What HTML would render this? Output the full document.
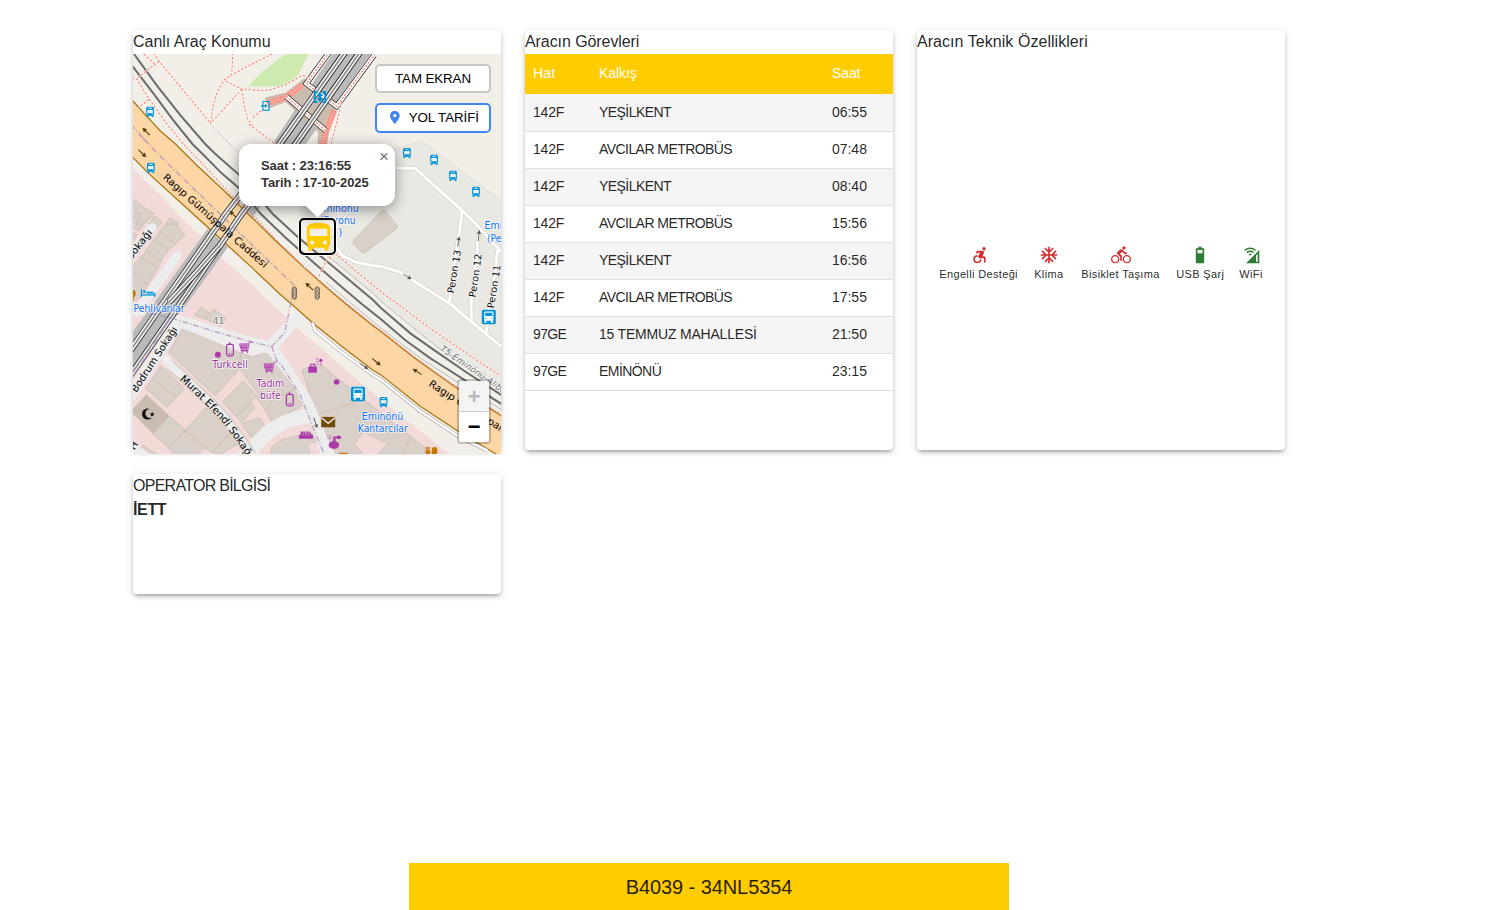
<!DOCTYPE html>
<html lang="tr">
<head>
<meta charset="utf-8">
<title>Araç Bilgisi</title>
<style>
*{box-sizing:border-box;}
html,body{margin:0;padding:0;background:#fff;}
body{width:1503px;height:910px;overflow:hidden;position:relative;font-family:"Liberation Sans",sans-serif;color:rgba(0,0,0,0.87);}
.card{position:absolute;background:#fff;border-radius:4px;box-shadow:0 3px 3px -2px rgba(0,0,0,0.2),0 3px 4px 0 rgba(0,0,0,0.14),0 1px 8px 0 rgba(0,0,0,0.12);}
.card h3{margin:0;font-weight:400;font-size:16px;line-height:24px;height:24px;letter-spacing:0.1px;white-space:nowrap;}
#c1{left:133px;top:30px;width:368px;height:420px;}
#c2{left:525px;top:30px;width:368px;height:420px;}
#c3{left:917px;top:30px;width:368px;height:420px;}
#c4{left:133px;top:474px;width:368px;height:120px;}
#map{position:absolute;left:0;top:24px;width:368px;height:400px;overflow:hidden;background:#f2efe9;}
#map svg{position:absolute;left:0;top:0;}
/* table */
table{border-collapse:collapse;width:368px;font-size:14px;table-layout:fixed;}
th{background:#ffcc00;color:#fff;font-weight:400;text-align:left;height:40px;padding:0 0 2px 8px;letter-spacing:0.15px;}
td{height:37px;padding:0 0 1px 8px;border-bottom:1px solid #e0e0e0;letter-spacing:0.15px;}
tr.o td{background:#f5f5f5;}
td.a{letter-spacing:-0.17px;}td.b{letter-spacing:-0.63px;}td.c{letter-spacing:-0.56px;}td.d{letter-spacing:-0.2px;}td.t{letter-spacing:-0.03px;}
/* features */
.feat{position:absolute;width:120px;text-align:center;font-size:11px;line-height:13px;white-space:nowrap;letter-spacing:0.35px;color:rgba(0,0,0,0.87);}
.feat svg{display:block;margin:0 auto 3px;}
/* map controls */
.mbtn{position:absolute;background:#fff;border-radius:5px;font-size:13.33px;text-align:center;color:#000;white-space:nowrap;}
.zoom{position:absolute;left:324px;top:325px;width:34px;height:65px;border:2px solid rgba(0,0,0,0.2);border-radius:4px;background-clip:padding-box;}
.zoom div{width:30px;height:30px;overflow:hidden;background:#fff;text-align:center;font:bold 22px/35px "Liberation Mono",monospace;color:#000;}
.zoom div.dis{background:#f4f4f4;color:#bbb;border-bottom:1px solid #ccc;height:31px;border-radius:2px 2px 0 0;}
.zoom div.en{border-radius:0 0 2px 2px;line-height:33.500px;}
.popup{position:absolute;left:106px;top:90px;width:156px;height:62px;background:#fff;border-radius:12px;box-shadow:0 3px 14px rgba(0,0,0,0.4);font-size:13px;font-weight:700;line-height:17.3px;color:#333;letter-spacing:-0.07px;padding:13px 0 0 22px;white-space:nowrap;}
.tip{position:absolute;left:11.5px;top:-9px;width:17px;height:17px;background:#fff;transform:rotate(45deg);box-shadow:0 3px 14px rgba(0,0,0,0.4);}
.tipc{position:absolute;left:164.5px;top:152px;width:40px;height:20px;overflow:hidden;}
.pclose{position:absolute;left:246px;top:94px;font-size:17px;line-height:17px;color:#757575;font-weight:400;}
.marker{position:absolute;left:166px;top:164px;width:37.300px;height:37.300px;border:2.100px solid #000;border-radius:5px;box-shadow:0 0 0 1px rgba(255,255,255,0.85);}
.marker svg{position:absolute;left:-1px;top:-1.800px;}
#bar{position:absolute;left:409px;top:863px;width:600px;height:47px;background:#ffcc00;text-align:center;font-size:20px;line-height:48px;color:rgba(0,0,0,0.87);letter-spacing:-0.08px;}
</style>
</head>
<body>

<div class="card" id="c1">
<h3 style="letter-spacing:-0.02px">Canlı Araç Konumu</h3>
<div id="map">
<!--MAPSTART--><svg width="368" height="400" viewBox="0 0 368 400">
<rect width="368" height="400" fill="#f2efe9"/>
<defs><clipPath id="cmk"><rect x="150" y="140" width="100" height="24.2"/><rect x="203.4" y="140" width="60" height="60"/></clipPath></defs>
<defs><clipPath id="cst"><rect x="120" y="0" width="130" height="92"/></clipPath></defs>
<polygon points="260.9,95.3 288.6,86.9 368.0,146.3 372.0,146.0 372.0,341.0 340.0,318.0 303.4,292.4 248.0,247.4 240.0,239.1 194.2,201.6 194.0,191.0 214.0,160.0 232.0,132.0" fill="#e9e8e3" />
<polyline points="232.0,132.0 260.9,95.3 288.6,86.9 368.0,146.3" fill="none" stroke="#d9cfbb" stroke-width="0.5" />
<polygon points="-2.0,112.6 29.7,143.3 44.5,160.0 68.3,182.8 87.0,203.0 120.0,231.2 128.0,240.0 153.6,263.2 163.5,273.6 193.2,298.4 207.0,311.0 240.0,338.7 254.0,351.0 316.3,400.0 -2.0,402.0" fill="#f2dad9" />
<polygon points="154.6,-1.0 176.4,-1.0 163.5,23.7 148.7,32.2 120.0,32.6 119.0,28.7 120.0,26.7 128.9,17.8 144.7,5.9" fill="#cdebb0" />
<polygon points="115.3,31.7 120.0,27.7 120.0,32.2" fill="#cdebb0" />
<polygon points="38.1,164.0 51.9,181.3 43.0,189.7 35.6,196.1 28.2,206.5 24.7,213.9 14.8,231.2 5.9,244.1 -1.0,248.0 -1.0,212.4 9.9,201.6 26.2,177.8" fill="#d9d0c9" stroke="#c4b5a7" stroke-width="0.6" stroke-linejoin="round"/>
<polyline points="26.2,177.8 43.0,189.7" fill="none" stroke="#c4b5a7" stroke-width="0.6" />
<polyline points="19.8,186.2 35.6,196.1" fill="none" stroke="#c4b5a7" stroke-width="0.6" />
<polyline points="12.9,196.1 28.2,206.5" fill="none" stroke="#c4b5a7" stroke-width="0.6" />
<polyline points="7.9,203.5 24.7,213.9" fill="none" stroke="#c4b5a7" stroke-width="0.6" />
<polyline points="-1.0,218.4 14.8,231.2" fill="none" stroke="#c4b5a7" stroke-width="0.6" />
<polygon points="-1.0,159.0 20.3,159.0 5.9,176.8 -1.0,172.9" fill="#d9d0c9" stroke="#c4b5a7" stroke-width="0.6" stroke-linejoin="round"/>
<polygon points="21.3,162.0 29.2,167.9 23.2,174.8 15.8,169.4" fill="#d9d0c9" stroke="#c4b5a7" stroke-width="0.6" stroke-linejoin="round"/>
<polygon points="-1.0,177.8 4.0,180.8 -1.0,188.7" fill="#d9d0c9" stroke="#c4b5a7" stroke-width="0.6" stroke-linejoin="round"/>
<polygon points="-1.0,144.8 8.9,151.2 -1.0,167.1" fill="#d9d0c9" stroke="#c4b5a7" stroke-width="0.6" stroke-linejoin="round"/>
<polygon points="9.9,152.7 21.3,159.1 10.9,170.0 3.0,170.0" fill="#d9d0c9" stroke="#c4b5a7" stroke-width="0.6" stroke-linejoin="round"/>
<polygon points="37.1,163.6 46.5,170.0 32.6,170.0" fill="#d9d0c9" stroke="#c4b5a7" stroke-width="0.6" stroke-linejoin="round"/>
<polygon points="61.3,261.3 68.1,253.1 76.2,259.3 72.0,264.7" fill="#d9d0c9" stroke="#c4b5a7" stroke-width="0.6" stroke-linejoin="round"/>
<polygon points="72.0,264.7 80.6,255.0 93.0,264.2 87.6,271.7" fill="#d9d0c9" stroke="#c4b5a7" stroke-width="0.6" stroke-linejoin="round"/>
<polygon points="49.5,274.6 107.8,298.5 105.8,315.9 82.1,341.7 35.6,298.4" fill="#d9d0c9" stroke="#c4b5a7" stroke-width="0.6" stroke-linejoin="round"/>
<polygon points="107.8,298.5 120.0,303.3 129.9,298.4 135.8,300.3 161.6,334.7 140.0,346.0 132.5,356.0 123.6,344.6 126.1,341.7 107.5,315.4" fill="#d9d0c9" stroke="#c4b5a7" stroke-width="0.6" stroke-linejoin="round"/>
<polygon points="89.5,347.6 110.2,327.3 124.1,341.7 102.3,362.4" fill="#d9d0c9" stroke="#c4b5a7" stroke-width="0.6" stroke-linejoin="round"/>
<polygon points="103.3,361.9 117.6,349.1 122.1,354.0 108.2,367.9" fill="#d9d0c9" stroke="#c4b5a7" stroke-width="0.6" stroke-linejoin="round"/>
<polygon points="140.0,346.0 161.6,334.7 169.0,352.0 138.8,368.4 132.5,356.0" fill="#d9d0c9" stroke="#c4b5a7" stroke-width="0.6" stroke-linejoin="round"/>
<polygon points="108.2,369.3 126.5,363.9 133.0,372.8 119.1,384.7" fill="#d9d0c9" stroke="#c4b5a7" stroke-width="0.6" stroke-linejoin="round"/>
<polygon points="13.4,340.7 36.1,361.9 20.3,379.7 -2.0,357.5" fill="#c9bcb0" stroke="#c4b5a7" stroke-width="0.6" stroke-linejoin="round"/>
<polygon points="27.7,312.0 51.4,334.7 34.1,353.5 12.4,334.2 19.8,323.9" fill="#d9d0c9" stroke="#c4b5a7" stroke-width="0.6" stroke-linejoin="round"/>
<polyline points="19.8,323.9 42.5,343.6" fill="none" stroke="#c4b5a7" stroke-width="0.6" />
<polygon points="36.1,361.9 52.4,375.8 35.6,394.1 20.3,379.7" fill="#d9d0c9" stroke="#c4b5a7" stroke-width="0.6" stroke-linejoin="round"/>
<polygon points="52.4,375.8 71.2,394.1 64.3,401.0 41.6,401.0 35.6,394.1" fill="#d9d0c9" stroke="#c4b5a7" stroke-width="0.6" stroke-linejoin="round"/>
<polygon points="73.2,353.5 97.4,378.8 79.1,398.0 71.2,394.1 52.4,375.8" fill="#d9d0c9" stroke="#c4b5a7" stroke-width="0.6" stroke-linejoin="round"/>
<polygon points="97.4,378.8 106.8,389.1 86.1,401.0 79.1,398.0" fill="#d9d0c9" stroke="#c4b5a7" stroke-width="0.6" stroke-linejoin="round"/>
<polygon points="9.9,391.1 24.7,401.0 5.9,401.0" fill="#d9d0c9" stroke="#c4b5a7" stroke-width="0.6" stroke-linejoin="round"/>
<polygon points="169.0,316.4 183.3,310.0 189.3,312.0 240.0,352.5 254.0,364.0 300.0,400.0 202.1,400.0 193.2,381.2 186.3,361.4 177.4,342.6" fill="#d9d0c9" stroke="#c4b5a7" stroke-width="0.6" stroke-linejoin="round"/>
<polyline points="186.3,360.5 219.9,348.6 227.8,345.6" fill="none" stroke="#c4b5a7" stroke-width="0.6" />
<polyline points="277.7,382.2 269.8,401.0" fill="none" stroke="#c4b5a7" stroke-width="0.6" />
<polygon points="221.5,389.9 230.7,378.0 254.3,389.9 243.6,402.0 232.0,402.0" fill="#f2dad9" stroke="#c4b5a7" stroke-width="0.5" />
<polygon points="147.7,386.2 166.5,381.2 179.4,379.3 183.3,387.2 175.4,401.0 137.8,401.0 138.8,393.1" fill="#d9d0c9" stroke="#c4b5a7" stroke-width="0.6" stroke-linejoin="round"/>
<polygon points="175.4,391.1 183.3,388.2 189.3,401.0 179.4,401.0" fill="#f2dad9" />
<polygon points="-2.0,249.0 41.5,259.8 120.0,283.5 134.8,286.5 145.7,293.9 134.8,299.4 129.9,298.4 120.0,302.0 107.8,298.5 49.5,274.6 -2.0,257.5" fill="#ededed" />
<polygon points="134.8,286.5 164.5,255.8 172.4,263.7 145.7,293.9" fill="#ededed" />
<polygon points="134.8,299.4 142.8,310.0 161.6,333.7 171.4,353.5 179.4,373.3 187.3,400.0 202.1,400.0 193.2,381.2 186.3,361.4 177.4,342.6 156.6,310.0 145.7,293.9 134.8,286.5" fill="#ededed" />
<polygon points="171.4,355.0 149.7,361.4 131.9,371.3 120.0,383.2 104.0,400.0 124.9,400.0 127.9,396.1 139.8,383.2 154.6,374.3 178.4,368.4" fill="#ededed" />
<polyline points="36.6,310.5 53.9,326.3 78.7,350.1 92.5,364.9 107.3,384.7 118.5,401.5" fill="none" stroke="#d9d0c9" stroke-width="11.2" />
<polyline points="30.5,302.5 36.6,310.5 53.9,326.3 78.7,350.1 92.5,364.9 107.3,384.7 118.5,401.5" fill="none" stroke="#ededed" stroke-width="7.6" />
<polyline points="44.0,270.0 7.0,327.0 -6.0,346.0" fill="none" stroke="#ededed" stroke-width="11.5" />
<polyline points="19.3,173.4 -5.0,204.5" fill="none" stroke="#ededed" stroke-width="8.5" stroke-linecap="round"/>
<polyline points="44.3,201.6 9.9,250.0 4.0,258.0" fill="none" stroke="#ededed" stroke-width="9.5" stroke-linecap="round"/>
<polygon points="-2.0,387.0 17.8,400.0 -2.0,400.0" fill="#ededed" />
<polygon points="-3.0,44.0 0.0,47.0 12.9,61.3 27.7,77.2 42.5,90.0 63.3,110.7 99.0,144.3 120.0,164.5 144.7,188.7 171.4,213.9 199.0,238.2 213.0,250.0 240.0,271.7 248.0,277.6 280.6,303.3 317.3,329.5 325.2,334.7 368.0,361.4 380.0,369.0 372.0,406.0 362.8,400.0 325.2,377.3 287.6,352.5 248.0,320.9 240.0,316.2 209.0,292.4 179.4,268.7 164.5,255.3 146.7,240.0 120.0,214.6 71.2,170.0 49.5,150.2 15.8,119.6 0.0,103.7 -3.0,100.7" fill="#fcd6a4" />
<polyline points="-3.0,44.0 0.0,47.0 12.9,61.3 27.7,77.2 42.5,90.0 63.3,110.7 99.0,144.3 120.0,164.5 144.7,188.7 171.4,213.9 199.0,238.2 213.0,250.0 240.0,271.7 248.0,277.6 280.6,303.3 317.3,329.5 325.2,334.7 368.0,361.4 380.0,369.0" fill="none" stroke="#a5720e" stroke-width="1.2" />
<polyline points="372.0,406.0 362.8,400.0 325.2,377.3 287.6,352.5 248.0,320.9 240.0,316.2 209.0,292.4 179.4,268.7 164.5,255.3 146.7,240.0 120.0,214.6 71.2,170.0 49.5,150.2 15.8,119.6 0.0,103.7 -3.0,100.7" fill="none" stroke="#a5720e" stroke-width="1.2" />
<polyline points="179.4,268.7 182.3,276.6 209.0,298.4 240.0,321.0 248.0,325.8 287.6,357.5 325.2,382.2 351.9,395.3 354.5,396.8" fill="none" stroke="#9a9a9a" stroke-width="3.6" />
<polyline points="179.4,268.7 182.3,276.6 209.0,298.4 240.0,321.0 248.0,325.8 287.6,357.5 325.2,382.2 351.9,395.3 354.5,396.8" fill="none" stroke="#ffffff" stroke-width="2.6" />
<polyline points="250.0,114.0 262.8,114.1 282.6,114.6 329.1,156.7 343.0,170.0 370.0,199.6" fill="none" stroke="#d3d1cb" stroke-width="4.2" stroke-linejoin="round"/>
<polyline points="201.1,189.7 209.0,201.6 223.9,208.5 240.0,211.4 248.0,212.4 267.8,218.4 287.6,231.2 317.3,250.0 370.0,294.0" fill="none" stroke="#d3d1cb" stroke-width="4.2" stroke-linejoin="round"/>
<polyline points="329.1,156.7 326.2,179.8 321.2,209.5 316.3,250.0" fill="none" stroke="#d3d1cb" stroke-width="4.2" stroke-linejoin="round"/>
<polyline points="345.9,176.8 343.0,209.5 338.0,250.0 338.5,266.7" fill="none" stroke="#d3d1cb" stroke-width="4.2" stroke-linejoin="round"/>
<polyline points="364.7,195.6 361.8,219.4 356.8,250.0 352.9,279.6" fill="none" stroke="#d3d1cb" stroke-width="4.2" stroke-linejoin="round"/>
<polyline points="250.0,114.0 262.8,114.1 282.6,114.6 329.1,156.7 343.0,170.0 370.0,199.6" fill="none" stroke="#ffffff" stroke-width="3.0" stroke-linejoin="round"/>
<polyline points="201.1,189.7 209.0,201.6 223.9,208.5 240.0,211.4 248.0,212.4 267.8,218.4 287.6,231.2 317.3,250.0 370.0,294.0" fill="none" stroke="#ffffff" stroke-width="3.0" stroke-linejoin="round"/>
<polyline points="329.1,156.7 326.2,179.8 321.2,209.5 316.3,250.0" fill="none" stroke="#ffffff" stroke-width="3.0" stroke-linejoin="round"/>
<polyline points="345.9,176.8 343.0,209.5 338.0,250.0 338.5,266.7" fill="none" stroke="#ffffff" stroke-width="3.0" stroke-linejoin="round"/>
<polyline points="364.7,195.6 361.8,219.4 356.8,250.0 352.9,279.6" fill="none" stroke="#ffffff" stroke-width="3.0" stroke-linejoin="round"/>
<polyline points="171.4,213.4 199.1,179.8 214.0,160.0 224.0,146.0" fill="none" stroke="#c9c7c1" stroke-width="2.8" />
<polyline points="171.4,213.4 199.1,179.8 214.0,160.0 224.0,146.0" fill="none" stroke="#ffffff" stroke-width="1.8" />
<path d="M220.5,186.8 L248.3,156.6 Q250.2,154.6 252,156.8 L263.8,171.2 Q265.6,173.4 263.2,175 L232.2,198.6 Q230.2,200 228.6,198.2 L220.3,189.6 Q219.1,188.3 220.5,186.8 Z" fill="#d9d0c9" stroke="#c4b5a7" stroke-width="0.6"/>
<polygon points="199.1,0.0 237.7,0.0 120.0,163.0 104.0,143.0" fill="#bababa" />
<polygon points="74.7,174.8 95.0,193.1 53.9,250.0 36.6,269.7 -2.0,324.0 -2.0,280.0 20.3,250.0" fill="#bababa" />
<polyline points="214.3,-5.0 210.7,0.0 146.7,90.0 92.7,160.0 29.7,250.0 -5.0,300.0" fill="none" stroke="#222" stroke-width="6.4" />
<polyline points="214.3,-5.0 210.7,0.0 146.7,90.0 92.7,160.0 29.7,250.0 -5.0,300.0" fill="none" stroke="#f2f2f2" stroke-width="4.8" />
<polyline points="214.3,-5.0 210.7,0.0 146.7,90.0 92.7,160.0 29.7,250.0 -5.0,300.0" fill="none" stroke="#8a8a8a" stroke-width="1.6" />
<polyline points="229.1,-5.0 225.6,0.0 162.7,90.0 108.6,160.0 47.0,250.0 -3.0,322.0" fill="none" stroke="#222" stroke-width="6.4" />
<polyline points="229.1,-5.0 225.6,0.0 162.7,90.0 108.6,160.0 47.0,250.0 -3.0,322.0" fill="none" stroke="#f2f2f2" stroke-width="4.8" />
<polyline points="229.1,-5.0 225.6,0.0 162.7,90.0 108.6,160.0 47.0,250.0 -3.0,322.0" fill="none" stroke="#8a8a8a" stroke-width="1.6" />
<polyline points="85.5,193.0 62.0,220.0 36.0,248.0" fill="none" stroke="#222" stroke-width="6.4" />
<polyline points="85.5,193.0 62.0,220.0 36.0,248.0" fill="none" stroke="#f2f2f2" stroke-width="4.8" />
<polyline points="85.5,193.0 62.0,220.0 36.0,248.0" fill="none" stroke="#8a8a8a" stroke-width="1.6" />
<polyline points="1.0,0.0 24.7,32.6 47.5,61.3 72.2,90.0 82.1,99.8 105.9,120.6 139.8,160.0 164.5,182.8 189.3,203.5 218.9,228.3 240.0,246.0 248.0,253.9 277.7,279.6 304.4,298.4 333.0,318.0 370.0,342.0" fill="none" stroke="#6b6b6b" stroke-width="2.0" />
<polyline points="-1.0,11.6 19.8,38.6 39.6,65.3 59.4,90.0 69.3,99.8 89.0,119.6 105.9,133.9 127.9,160.0 152.6,183.7 179.4,207.5 209.0,233.2 228.8,250.0 248.0,265.2 272.7,286.5 297.5,304.3 306.4,310.0 332.1,326.3 356.8,342.6 370.0,351.0" fill="none" stroke="#6b6b6b" stroke-width="2.0" />
<polyline points="194.2,201.6 240.0,239.1 248.0,247.4 303.4,292.4 340.0,318.0" fill="none" stroke="#8c8c8c" stroke-width="0.5" />
<polyline points="193.2,228.3 218.9,250.0 248.0,274.1 287.6,304.3 324.2,328.0 372.0,358.0" fill="none" stroke="#8c8c8c" stroke-width="0.5" />
<polygon points="132.4,44.0 152.6,39.1 170.9,25.2 205.1,48.5 207.1,51.4 202.1,55.4 195.2,78.2 193.7,91.0 184.8,91.0 185.8,78.2 152.6,47.5 135.8,53.9" fill="#c9bbae" stroke="#b4a596" stroke-width="0.6" stroke-linejoin="round"/>
<polyline points="134.8,49.0 152.6,43.5 169.5,31.2" fill="none" stroke="#f7b7ae" stroke-width="6.5" />
<polyline points="134.8,49.0 152.6,43.5 169.5,31.2" fill="none" stroke="#fa8072" stroke-width="5.5" stroke-dasharray="1.6,1.0"/>
<polyline points="134.8,49.0 152.6,43.5 169.5,31.2" fill="none" stroke="#f7c9c2" stroke-width="0.7" />
<polyline points="201.1,56.4 193.7,75.2 189.7,91.0" fill="none" stroke="#f7b7ae" stroke-width="6.5" />
<polyline points="201.1,56.4 193.7,75.2 189.7,91.0" fill="none" stroke="#fa8072" stroke-width="5.5" stroke-dasharray="1.6,1.0"/>
<polyline points="201.1,56.4 193.7,75.2 189.7,91.0" fill="none" stroke="#f7c9c2" stroke-width="0.7" />
<polyline points="196.4,-2.0 173.2,29.5 203.6,52.2 241.2,1.0" fill="none" stroke="#222" stroke-width="5.6" stroke-linejoin="miter"/>
<polyline points="196.4,-2.0 173.2,29.5 203.6,52.2 241.2,1.0" fill="none" stroke="#ffffff" stroke-width="4.2" stroke-linejoin="miter"/>
<polyline points="196.4,-2.0 173.2,29.5 203.6,52.2 241.2,1.0" fill="none" stroke="#fa8072" stroke-width="1.3" stroke-dasharray="2.2,1.4"/>
<polyline points="153.1,42.3 192.7,76.7" fill="none" stroke="#222" stroke-width="5.6" stroke-linejoin="miter"/>
<polyline points="153.1,42.3 192.7,76.7" fill="none" stroke="#ffffff" stroke-width="4.2" stroke-linejoin="miter"/>
<polyline points="153.1,42.3 192.7,76.7" fill="none" stroke="#fa8072" stroke-width="1.3" stroke-dasharray="2.2,1.4"/>
<polyline points="214.3,-5.0 210.7,0.0 146.7,90.0 92.7,160.0 29.7,250.0 -5.0,300.0" fill="none" stroke="#222" stroke-width="6.4" clip-path="url(#cst)"/>
<polyline points="214.3,-5.0 210.7,0.0 146.7,90.0 92.7,160.0 29.7,250.0 -5.0,300.0" fill="none" stroke="#f2f2f2" stroke-width="4.8" clip-path="url(#cst)"/>
<polyline points="214.3,-5.0 210.7,0.0 146.7,90.0 92.7,160.0 29.7,250.0 -5.0,300.0" fill="none" stroke="#8a8a8a" stroke-width="1.6" clip-path="url(#cst)"/>
<polyline points="229.1,-5.0 225.6,0.0 162.7,90.0 108.6,160.0 47.0,250.0 -3.0,322.0" fill="none" stroke="#222" stroke-width="6.4" clip-path="url(#cst)"/>
<polyline points="229.1,-5.0 225.6,0.0 162.7,90.0 108.6,160.0 47.0,250.0 -3.0,322.0" fill="none" stroke="#f2f2f2" stroke-width="4.8" clip-path="url(#cst)"/>
<polyline points="229.1,-5.0 225.6,0.0 162.7,90.0 108.6,160.0 47.0,250.0 -3.0,322.0" fill="none" stroke="#8a8a8a" stroke-width="1.6" clip-path="url(#cst)"/>
<polyline points="10.9,0.0 21.3,9.9" fill="none" stroke="#ffffff" stroke-width="2.6" stroke-opacity="0.45"/>
<polyline points="10.9,0.0 21.3,9.9" fill="none" stroke="#fa8072" stroke-width="1.15" stroke-dasharray="2.3,1.8" stroke-opacity="1"/>
<polyline points="20.8,-1.0 26.2,7.4 55.4,42.5 78.2,70.2" fill="none" stroke="#ffffff" stroke-width="2.6" stroke-opacity="0.45"/>
<polyline points="20.8,-1.0 26.2,7.4 55.4,42.5 78.2,70.2" fill="none" stroke="#fa8072" stroke-width="1.15" stroke-dasharray="2.3,1.8" stroke-opacity="1"/>
<polyline points="26.2,7.4 14.8,15.8 4.0,24.7" fill="none" stroke="#ffffff" stroke-width="2.6" stroke-opacity="0.45"/>
<polyline points="26.2,7.4 14.8,15.8 4.0,24.7" fill="none" stroke="#fa8072" stroke-width="1.15" stroke-dasharray="2.3,1.8" stroke-opacity="1"/>
<polyline points="-1.0,23.7 4.0,25.2 15.8,44.5 32.6,68.3 49.5,89.0" fill="none" stroke="#ffffff" stroke-width="2.6" stroke-opacity="0.45"/>
<polyline points="-1.0,23.7 4.0,25.2 15.8,44.5 32.6,68.3 49.5,89.0" fill="none" stroke="#fa8072" stroke-width="1.15" stroke-dasharray="2.3,1.8" stroke-opacity="1"/>
<polyline points="15.8,45.5 5.9,53.4" fill="none" stroke="#ffffff" stroke-width="2.6" stroke-opacity="0.45"/>
<polyline points="15.8,45.5 5.9,53.4" fill="none" stroke="#fa8072" stroke-width="1.15" stroke-dasharray="2.3,1.8" stroke-opacity="1"/>
<polyline points="99.9,-1.0 98.9,16.8 97.9,21.3 91.0,26.2 84.1,38.6 80.1,51.4 78.2,65.3 77.2,69.7" fill="none" stroke="#ffffff" stroke-width="2.6" stroke-opacity="0.45"/>
<polyline points="99.9,-1.0 98.9,16.8 97.9,21.3 91.0,26.2 84.1,38.6 80.1,51.4 78.2,65.3 77.2,69.7" fill="none" stroke="#fa8072" stroke-width="1.15" stroke-dasharray="2.3,1.8" stroke-opacity="1"/>
<polyline points="124.7,6.9 97.9,21.3" fill="none" stroke="#ffffff" stroke-width="2.6" stroke-opacity="0.45"/>
<polyline points="124.7,6.9 97.9,21.3" fill="none" stroke="#fa8072" stroke-width="1.15" stroke-dasharray="2.3,1.8" stroke-opacity="1"/>
<polyline points="93.0,27.2 108.8,35.1 120.0,35.6" fill="none" stroke="#ffffff" stroke-width="2.6" stroke-opacity="0.45"/>
<polyline points="93.0,27.2 108.8,35.1 120.0,35.6" fill="none" stroke="#fa8072" stroke-width="1.15" stroke-dasharray="2.3,1.8" stroke-opacity="1"/>
<polyline points="108.8,35.1 77.2,69.7" fill="none" stroke="#ffffff" stroke-width="2.6" stroke-opacity="0.45"/>
<polyline points="108.8,35.1 77.2,69.7" fill="none" stroke="#fa8072" stroke-width="1.15" stroke-dasharray="2.3,1.8" stroke-opacity="1"/>
<polyline points="108.8,35.1 111.8,55.4 114.8,65.3 120.0,72.2" fill="none" stroke="#ffffff" stroke-width="2.6" stroke-opacity="0.45"/>
<polyline points="108.8,35.1 111.8,55.4 114.8,65.3 120.0,72.2" fill="none" stroke="#fa8072" stroke-width="1.15" stroke-dasharray="2.3,1.8" stroke-opacity="1"/>
<polyline points="79.1,72.2 98.9,93.0" fill="none" stroke="#b0b0b0" stroke-width="0.7" stroke-dasharray="2,2" stroke-opacity="1"/>
<polyline points="119.0,10.4 138.8,0.0 143.7,-2.5" fill="none" stroke="#ffffff" stroke-width="2.6" stroke-opacity="0.45"/>
<polyline points="119.0,10.4 138.8,0.0 143.7,-2.5" fill="none" stroke="#fa8072" stroke-width="1.15" stroke-dasharray="2.3,1.8" stroke-opacity="1"/>
<polyline points="120.0,36.1 134.8,36.6 152.6,30.7 169.5,21.3 175.4,23.7" fill="none" stroke="#ffffff" stroke-width="2.6" stroke-opacity="0.45"/>
<polyline points="120.0,36.1 134.8,36.6 152.6,30.7 169.5,21.3 175.4,23.7" fill="none" stroke="#fa8072" stroke-width="1.15" stroke-dasharray="2.3,1.8" stroke-opacity="1"/>
<polyline points="120.0,63.3 129.9,55.4" fill="none" stroke="#ffffff" stroke-width="2.6" stroke-opacity="0.45"/>
<polyline points="120.0,63.3 129.9,55.4" fill="none" stroke="#fa8072" stroke-width="1.15" stroke-dasharray="2.3,1.8" stroke-opacity="1"/>
<polyline points="116.0,70.4 120.0,73.2 140.8,89.0 145.7,93.0" fill="none" stroke="#ffffff" stroke-width="2.6" stroke-opacity="0.45"/>
<polyline points="116.0,70.4 120.0,73.2 140.8,89.0 145.7,93.0" fill="none" stroke="#fa8072" stroke-width="1.15" stroke-dasharray="2.3,1.8" stroke-opacity="1"/>
<polyline points="208.5,47.5 204.1,67.3 198.2,90.0 197.2,95.0" fill="none" stroke="#ffffff" stroke-width="2.6" stroke-opacity="0.45"/>
<polyline points="208.5,47.5 204.1,67.3 198.2,90.0 197.2,95.0" fill="none" stroke="#fa8072" stroke-width="1.15" stroke-dasharray="2.3,1.8" stroke-opacity="1"/>
<polyline points="49.5,89.0 69.3,109.7 99.0,141.8 120.0,161.5 144.7,187.6 171.4,213.1 199.0,237.4 213.0,249.2 240.0,271.0 248.0,276.9 280.6,302.6 317.3,328.8 325.2,334.0 368.0,360.7" fill="none" stroke="#f9756c" stroke-width="1.5" stroke-dasharray="0.01,3.3" stroke-linecap="round" stroke-opacity="0.9"/>
<polyline points="186.0,222.0 193.0,207.0 202.1,199.6 240.0,231.2 251.0,240.0 297.5,274.6 346.9,308.3 372.0,324.7" fill="none" stroke="#ffffff" stroke-width="2.6" stroke-opacity="0.45"/>
<polyline points="186.0,222.0 193.0,207.0 202.1,199.6 240.0,231.2 251.0,240.0 297.5,274.6 346.9,308.3 372.0,324.7" fill="none" stroke="#fa8072" stroke-width="1.15" stroke-dasharray="2.3,1.8" stroke-opacity="1"/>
<polyline points="87.1,80.0 105.9,98.8" fill="none" stroke="#b0b0b0" stroke-width="0.7" stroke-dasharray="2,2" stroke-opacity="1"/>
<polyline points="-2.0,70.5 14.8,89.0 5.9,80.0 29.7,104.7 59.4,133.4 89.0,162.0 160.6,230.7 157.6,250.0 154.6,264.7 151.7,278.6 138.8,292.4 120.0,288.5" fill="none" stroke="#a688bb" stroke-width="1.5" stroke-dasharray="6,2,1.300,2" stroke-opacity="0.68"/>
<polyline points="138.8,292.4 144.7,309.3 147.7,310.0 167.5,341.7 175.4,361.4 183.3,381.2 191.2,400.0" fill="none" stroke="#a688bb" stroke-width="1.5" stroke-dasharray="6,2,1.300,2" stroke-opacity="0.68"/>
<polyline points="120.0,288.5 80.0,277.0 41.5,265.0 20.0,260.0 -2.0,254.0" fill="none" stroke="#a688bb" stroke-width="1.5" stroke-dasharray="6,2,1.300,2" stroke-opacity="0.68"/>
<polyline points="36.0,266.0 20.0,292.0 0.0,322.0" fill="none" stroke="#a688bb" stroke-width="1.5" stroke-dasharray="6,2,1.300,2" stroke-opacity="0.68"/>
<g transform="translate(17.1,57.9) scale(1.00)"><rect x="-3.9" y="-5.1" width="7.8" height="8.9" rx="1.6" fill="#0092da"/><rect x="-2.8" y="-1.9" width="5.6" height="3.2" fill="#eef0ee"/><rect x="-2" y="-4.1" width="4" height="0.9" rx="0.4" fill="#eef0ee"/><rect x="-3.4" y="3" width="1.8" height="2.1" rx="0.5" fill="#0092da"/><rect x="1.600" y="3" width="1.8" height="2.1" rx="0.5" fill="#0092da"/><circle cx="-2.5" cy="2.4" r="0.5" fill="#eef0ee"/><circle cx="2.5" cy="2.4" r="0.5" fill="#eef0ee"/></g>
<g transform="translate(17.9,113.9) scale(1.00)"><rect x="-3.9" y="-5.1" width="7.8" height="8.9" rx="1.6" fill="#0092da"/><rect x="-2.8" y="-1.9" width="5.6" height="3.2" fill="#eef0ee"/><rect x="-2" y="-4.1" width="4" height="0.9" rx="0.4" fill="#eef0ee"/><rect x="-3.4" y="3" width="1.8" height="2.1" rx="0.5" fill="#0092da"/><rect x="1.600" y="3" width="1.8" height="2.1" rx="0.5" fill="#0092da"/><circle cx="-2.5" cy="2.4" r="0.5" fill="#eef0ee"/><circle cx="2.5" cy="2.4" r="0.5" fill="#eef0ee"/></g>
<g transform="translate(273.9,99.0) scale(1.00)"><rect x="-3.9" y="-5.1" width="7.8" height="8.9" rx="1.6" fill="#0092da"/><rect x="-2.8" y="-1.9" width="5.6" height="3.2" fill="#eef0ee"/><rect x="-2" y="-4.1" width="4" height="0.9" rx="0.4" fill="#eef0ee"/><rect x="-3.4" y="3" width="1.8" height="2.1" rx="0.5" fill="#0092da"/><rect x="1.600" y="3" width="1.8" height="2.1" rx="0.5" fill="#0092da"/><circle cx="-2.5" cy="2.4" r="0.5" fill="#eef0ee"/><circle cx="2.5" cy="2.4" r="0.5" fill="#eef0ee"/></g>
<g transform="translate(301.1,105.9) scale(1.00)"><rect x="-3.9" y="-5.1" width="7.8" height="8.9" rx="1.6" fill="#0092da"/><rect x="-2.8" y="-1.9" width="5.6" height="3.2" fill="#eef0ee"/><rect x="-2" y="-4.1" width="4" height="0.9" rx="0.4" fill="#eef0ee"/><rect x="-3.4" y="3" width="1.8" height="2.1" rx="0.5" fill="#0092da"/><rect x="1.600" y="3" width="1.8" height="2.1" rx="0.5" fill="#0092da"/><circle cx="-2.5" cy="2.4" r="0.5" fill="#eef0ee"/><circle cx="2.5" cy="2.4" r="0.5" fill="#eef0ee"/></g>
<g transform="translate(320.0,121.8) scale(1.00)"><rect x="-3.9" y="-5.1" width="7.8" height="8.9" rx="1.6" fill="#0092da"/><rect x="-2.8" y="-1.9" width="5.6" height="3.2" fill="#eef0ee"/><rect x="-2" y="-4.1" width="4" height="0.9" rx="0.4" fill="#eef0ee"/><rect x="-3.4" y="3" width="1.8" height="2.1" rx="0.5" fill="#0092da"/><rect x="1.600" y="3" width="1.8" height="2.1" rx="0.5" fill="#0092da"/><circle cx="-2.5" cy="2.4" r="0.5" fill="#eef0ee"/><circle cx="2.5" cy="2.4" r="0.5" fill="#eef0ee"/></g>
<g transform="translate(343.0,137.9) scale(1.00)"><rect x="-3.9" y="-5.1" width="7.8" height="8.9" rx="1.6" fill="#0092da"/><rect x="-2.8" y="-1.9" width="5.6" height="3.2" fill="#eef0ee"/><rect x="-2" y="-4.1" width="4" height="0.9" rx="0.4" fill="#eef0ee"/><rect x="-3.4" y="3" width="1.8" height="2.1" rx="0.5" fill="#0092da"/><rect x="1.600" y="3" width="1.8" height="2.1" rx="0.5" fill="#0092da"/><circle cx="-2.5" cy="2.4" r="0.5" fill="#eef0ee"/><circle cx="2.5" cy="2.4" r="0.5" fill="#eef0ee"/></g>
<g transform="translate(250.5,348.1) scale(1.00)"><rect x="-3.9" y="-5.1" width="7.8" height="8.9" rx="1.6" fill="#0092da"/><rect x="-2.8" y="-1.9" width="5.6" height="3.2" fill="#eef0ee"/><rect x="-2" y="-4.1" width="4" height="0.9" rx="0.4" fill="#eef0ee"/><rect x="-3.4" y="3" width="1.8" height="2.1" rx="0.5" fill="#0092da"/><rect x="1.600" y="3" width="1.8" height="2.1" rx="0.5" fill="#0092da"/><circle cx="-2.5" cy="2.4" r="0.5" fill="#eef0ee"/><circle cx="2.5" cy="2.4" r="0.5" fill="#eef0ee"/></g>
<g transform="translate(355.8,263.0)"><rect x="-7" y="-7.2" width="14" height="14.4" rx="1.6" fill="#0092da"/><path d="M-4.6,-4.2 Q-4.6,-5.6 -3.2,-5.600 L3.200,-5.600 Q4.600,-5.600 4.600,-4.200 L4.600,3.800 L-4.600,3.800 Z" fill="#fff"/><rect x="-3.600" y="-4.300" width="7.200" height="3.300" fill="#0092da"/><rect x="-4.200" y="3.500" width="1.900" height="2.300" fill="#fff"/><rect x="2.300" y="3.500" width="1.900" height="2.300" fill="#fff"/><circle cx="-3.100" cy="1.500" r="0.600" fill="#0092da"/><circle cx="3.100" cy="1.500" r="0.600" fill="#0092da"/></g>
<g transform="translate(225.0,340.0)"><rect x="-7" y="-7.2" width="14" height="14.4" rx="1.6" fill="#0092da"/><path d="M-4.6,-4.2 Q-4.6,-5.6 -3.2,-5.600 L3.200,-5.600 Q4.600,-5.600 4.600,-4.200 L4.600,3.800 L-4.600,3.800 Z" fill="#fff"/><rect x="-3.600" y="-4.300" width="7.200" height="3.300" fill="#0092da"/><rect x="-4.200" y="3.500" width="1.900" height="2.300" fill="#fff"/><rect x="2.300" y="3.500" width="1.900" height="2.300" fill="#fff"/><circle cx="-3.100" cy="1.500" r="0.600" fill="#0092da"/><circle cx="3.100" cy="1.500" r="0.600" fill="#0092da"/></g>
<g transform="translate(132.5,51.9)"><rect x="-2.6" y="-4.4" width="6.200" height="8.800" fill="none" stroke="#0092da" stroke-width="1.100"/><path d="M-4.700,-0.600 H-0.500 V-2.200 L2,0 L-0.500,2.200 V0.600 H-4.700Z" fill="#0092da"/></g>
<g transform="translate(187,43)" fill="#0092da"><path d="M-6.200,-6.100 H-2.600 V-4.300 H-4.300 V4.300 H-2.600 V6.100 H-6.200Z"/><path d="M6.200,-6.100 H2.600 V-4.300 H4.300 V4.300 H2.600 V6.100 H6.200Z"/><path d="M0,-5.600 L3.100,-1 H-3.100Z"/><path d="M0,5.600 L3.100,1 H-3.100Z"/><rect x="-1.100" y="-1.500" width="2.200" height="3"/></g>
<g transform="translate(161.4,239.1)" fill="none" stroke="#5c5c5c" stroke-width="0.850"><rect x="-2.1" y="-6.200" width="4.200" height="12.400" rx="2.100"/><circle cx="0" cy="-3.800" r="1.400"/><circle cx="0" cy="0" r="1.400"/><circle cx="0" cy="3.800" r="1.400"/></g>
<g transform="translate(184.3,239.1)" fill="none" stroke="#5c5c5c" stroke-width="0.850"><rect x="-2.1" y="-6.200" width="4.200" height="12.400" rx="2.100"/><circle cx="0" cy="-3.800" r="1.400"/><circle cx="0" cy="0" r="1.400"/><circle cx="0" cy="3.800" r="1.400"/></g>
<path d="M16.8,81.1 L12.5,76.8" stroke="#4a390d" stroke-width="1.1" fill="none"/><path d="M9.4,73.7 L14.1,75.2 L10.9,78.4 Z" fill="#4a390d"/>
<path d="M5.4,95.8 L10.2,100.2" stroke="#4a390d" stroke-width="1.1" fill="none"/><path d="M13.4,103.2 L8.6,101.9 L11.7,98.5 Z" fill="#4a390d"/>
<path d="M102.9,163.1 L99.6,159.8" stroke="#4a390d" stroke-width="1.1" fill="none"/><path d="M96.5,156.7 L101.2,158.2 L98.0,161.4 Z" fill="#4a390d"/>
<path d="M180.3,236.2 L175.6,231.8" stroke="#4a390d" stroke-width="1.1" fill="none"/><path d="M172.4,228.8 L177.2,230.1 L174.0,233.5 Z" fill="#4a390d"/>
<path d="M288.6,320.6 L283.4,317.1" stroke="#4a390d" stroke-width="1.1" fill="none"/><path d="M279.7,314.7 L284.6,315.2 L282.1,319.0 Z" fill="#4a390d"/>
<path d="M239.4,304.6 L244.4,308.7" stroke="#4a390d" stroke-width="1.1" fill="none"/><path d="M247.8,311.5 L242.9,310.5 L245.9,306.9 Z" fill="#4a390d"/>
<path d="M324.7,192.6 L325.6,186.3" stroke="#555" stroke-width="0.9" fill="none"/><path d="M326.2,182.3 L327.6,186.5 L323.6,186.0 Z" fill="#555"/>
<path d="M345.4,187.2 L345.9,179.8" stroke="#555" stroke-width="0.9" fill="none"/><path d="M346.2,175.8 L347.9,179.9 L343.9,179.7 Z" fill="#555"/>
<path d="M270.3,220.3 L275.3,223.3" stroke="#555" stroke-width="0.9" fill="none"/><path d="M278.7,225.3 L274.2,225.0 L276.3,221.5 Z" fill="#555"/>
<path d="M226.8,309.3 L232.0,312.9" stroke="#555" stroke-width="0.9" fill="none"/><path d="M235.3,315.2 L230.9,314.6 L233.2,311.3 Z" fill="#555"/>
<path d="M180.8,363.9 L183.0,370.5" stroke="#555" stroke-width="0.9" fill="none"/><path d="M184.3,374.3 L181.1,371.1 L184.9,369.9 Z" fill="#555"/>
<circle cx="84.9" cy="300.8" r="3.0" fill="#ac39ac"/>
<circle cx="203.6" cy="328.0" r="2.8" fill="#ac39ac"/>
<g transform="translate(97.0,295.6)"><rect x="-3.400" y="-5.200" width="6.800" height="11.400" rx="1.800" fill="none" stroke="#ac39ac" stroke-width="1.300"/><rect x="-1.200" y="-7.200" width="1.600" height="2.200" fill="#ac39ac"/><rect x="-1.500" y="3.800" width="3" height="0.900" fill="#ac39ac"/></g>
<g transform="translate(156.8,345.6)"><rect x="-3.400" y="-5.200" width="6.800" height="11.400" rx="1.800" fill="none" stroke="#ac39ac" stroke-width="1.300"/><rect x="-1.200" y="-7.200" width="1.600" height="2.200" fill="#ac39ac"/><rect x="-1.500" y="3.800" width="3" height="0.900" fill="#ac39ac"/></g>
<g transform="translate(112.5,293.4)" fill="none" stroke="#ac39ac"><path d="M-6,-3.500 H3.500 L2.600,1.800 H-4.600Z M-4.300,-3.500 L-3.600,1.800 M-2.400,-3.500 L-2.200,1.800 M-0.500,-3.500 L-0.700,1.800 M1.500,-3.500 L0.900,1.800 M-5.300,-1.600 H3.100 M-5,0.100 H2.900" stroke-width="0.800"/><path d="M3.400,-3.500 L4.300,-5 L6.400,-6.200" stroke-width="0.900"/><path d="M-4.600,3.300 H2.900" stroke-width="1.300"/><circle cx="-3.300" cy="4.700" r="0.800" fill="#ac39ac" stroke="none"/><circle cx="1.800" cy="4.700" r="0.800" fill="#ac39ac" stroke="none"/></g>
<g transform="translate(137.0,313.4)" fill="none" stroke="#ac39ac"><path d="M-6,-3.500 H3.500 L2.600,1.800 H-4.600Z M-4.300,-3.500 L-3.600,1.800 M-2.400,-3.500 L-2.200,1.800 M-0.500,-3.500 L-0.700,1.800 M1.500,-3.500 L0.900,1.800 M-5.300,-1.600 H3.100 M-5,0.100 H2.900" stroke-width="0.800"/><path d="M3.400,-3.500 L4.300,-5 L6.400,-6.200" stroke-width="0.900"/><path d="M-4.600,3.300 H2.900" stroke-width="1.300"/><circle cx="-3.300" cy="4.700" r="0.800" fill="#ac39ac" stroke="none"/><circle cx="1.800" cy="4.700" r="0.800" fill="#ac39ac" stroke="none"/></g>
<g transform="translate(179.6,314.5)" fill="#ac39ac"><rect x="-4.300" y="-1.800" width="8.600" height="6" /><rect x="-2" y="-4.300" width="4" height="3" fill="none" stroke="#ac39ac" stroke-width="1"/></g>
<g transform="translate(187.3,306.4)" fill="#ac39ac"><circle cx="0.500" cy="0" r="1.700"/><path d="M-4.500,-1.200 L-2.200,-1.700 M-4.300,1.800 L-2.200,0.700 M0.300,2.500 L1,4.800 M-1.500,2.300 L-2.500,3.800" stroke="#ac39ac" stroke-width="0.800"/></g>
<g transform="translate(195.2,368.1)"><rect x="-7" y="-5.200" width="14" height="10.400" fill="#734a08"/><path d="M-7,-4.600 L0,1.200 L7,-4.600" fill="none" stroke="#f3eee4" stroke-width="1.300"/></g>
<g transform="translate(172.9,381)" fill="#ac39ac"><rect x="-7" y="0.200" width="14" height="3.600"/><path d="M-5.800,0.400 L-5,-3.600 L-3.300,-3.600 L-2.600,0.400Z M-2.100,0.400 L-2.900,-3.600 L-1.200,-3.600 L0.300,0.400Z M1,0.400 L-0.500,-3.600 L1.200,-3.600 L3.400,0.400Z M4.100,0.400 L1.900,-3.600 L3.600,-3.600 L6.600,0.400Z"/></g>
<g transform="translate(200.9,391)" fill="#ac39ac"><ellipse cx="0" cy="0" rx="5.300" ry="3.900"/><rect x="-0.650" y="-6.800" width="2.300" height="3.600"/><rect x="-0.650" y="-8.500" width="4.600" height="1.900"/><ellipse cx="4.900" cy="-7.750" rx="2.300" ry="1.850"/><circle cx="-5.90" cy="-9.30" r="0.450"/><circle cx="-5.90" cy="-7.80" r="0.450"/><circle cx="-5.90" cy="-6.30" r="0.450"/><circle cx="-4.40" cy="-9.30" r="0.450"/><circle cx="-4.40" cy="-7.80" r="0.450"/><circle cx="-4.40" cy="-6.30" r="0.450"/><circle cx="-2.90" cy="-9.30" r="0.450"/><circle cx="-2.90" cy="-7.80" r="0.450"/><circle cx="-2.90" cy="-6.30" r="0.450"/></g>
<g transform="translate(298.5,397)" fill="#c77400"><rect x="-5.700" y="-4.200" width="1" height="8"/><rect x="-4.200" y="-4.200" width="1" height="8"/><rect x="-2.700" y="-4.200" width="1" height="8"/><rect x="-5.700" y="0" width="4" height="4"/><ellipse cx="3" cy="0.300" rx="2.900" ry="4.300"/></g>
<rect x="206" y="398.800" width="9" height="2" fill="#c77400"/>
<g transform="translate(15.1,239.3)" fill="#0092da"><rect x="-7.200" y="-4.200" width="1.100" height="8"/><rect x="6.100" y="-0.500" width="1.100" height="4.300"/><rect x="-7.200" y="1" width="14.400" height="1.300"/><circle cx="-3.800" cy="-1.700" r="1.400"/><path d="M-1.800,-1.500 H4 Q6.100,-1.500 6.100,0.300 H-1.800Z"/></g>
<ellipse cx="0.300" cy="239.500" rx="2.400" ry="3.600" fill="#c77400"/><rect x="-0.500" y="242" width="1.400" height="4" fill="#c77400"/>
<g transform="translate(15.600,360)"><circle cx="-1" cy="0" r="5.600" fill="#111"/><circle cx="1.300" cy="-0.500" r="4.500" fill="#c9bcb0"/><path d="M3.600,-2.200 L4.300,-0.500 L6.100,-0.400 L4.700,0.700 L5.200,2.500 L3.600,1.500 L2.100,2.500 L2.500,0.700 L1.100,-0.400 L2.900,-0.500Z" fill="#111"/></g>
<text x="29.2" y="124.2" font-size="10" fill="#000" text-anchor="start" font-family="DejaVu Sans, Liberation Sans, sans-serif"  transform="rotate(41.5 29.2 124.2)" textLength="136.0" lengthAdjust="spacingAndGlyphs" >Ragıp Gümüşpala Caddesi</text>
<text x="295.0" y="331.5" font-size="10" fill="#000" text-anchor="start" font-family="DejaVu Sans, Liberation Sans, sans-serif"  transform="rotate(32.5 295.0 331.5)" textLength="136.0" lengthAdjust="spacingAndGlyphs" >Ragıp Gümüşpala Caddesi</text>
<path id="pme" d="M36.1,311 L53.4,326.8 L78.2,350.6 L92,365.4 L106.8,385.2 L120,405" fill="none"/>
<text font-size="10" fill="#000" font-family="DejaVu Sans, Liberation Sans, sans-serif"  dy="3.6"><textPath href="#pme" startOffset="17.5" textLength="106.0" lengthAdjust="spacingAndGlyphs">Murat Efendi Sokağı</textPath></text>
<path id="pbs" d="M-4.5,344 L7,327 L44,270" fill="none"/>
<text font-size="10" fill="#000" font-family="DejaVu Sans, Liberation Sans, sans-serif"  dy="3.6"><textPath href="#pbs" startOffset="8.5" textLength="76.0" lengthAdjust="spacingAndGlyphs">Bodrum Sokağı</textPath></text>
<path id="pso" d="M-24,229 L-5,204.5 L19.3,173.4" fill="none"/>
<text font-size="10" fill="#000" font-family="DejaVu Sans, Liberation Sans, sans-serif"  dy="3.6"><textPath href="#pso" startOffset="31.5" textLength="35.0" lengthAdjust="spacingAndGlyphs">Sokağı</textPath></text>
<text x="1.5" y="396.5" font-size="10" fill="#000" text-anchor="start" font-family="DejaVu Sans, Liberation Sans, sans-serif"  transform="rotate(-58.0 1.5 396.5)" >H</text>
<path id="pp13" d="M315.6,245 L316.3,238.2 L321.2,209.5 L326.2,179.8" fill="none"/>
<text font-size="9.5" fill="#000" font-family="DejaVu Sans, Liberation Sans, sans-serif" stroke="#ffffff" stroke-width="1.6" stroke-opacity="0.85" paint-order="stroke" stroke-linejoin="round" dy="4.6"><textPath href="#pp13" startOffset="6" textLength="44.0" lengthAdjust="spacingAndGlyphs">Peron 13</textPath></text>
<path id="pp12" d="M337.5,249 L338,242.1 L343,209.5 L345.9,176.8" fill="none"/>
<text font-size="9.5" fill="#000" font-family="DejaVu Sans, Liberation Sans, sans-serif" stroke="#ffffff" stroke-width="1.6" stroke-opacity="0.85" paint-order="stroke" stroke-linejoin="round" dy="4.6"><textPath href="#pp12" startOffset="6" textLength="44.0" lengthAdjust="spacingAndGlyphs">Peron 12</textPath></text>
<path id="pp11" d="M355.700,262 L356.8,250 L361.8,219.4 L364.7,195.6" fill="none"/>
<text font-size="9.5" fill="#000" font-family="DejaVu Sans, Liberation Sans, sans-serif" stroke="#ffffff" stroke-width="1.6" stroke-opacity="0.85" paint-order="stroke" stroke-linejoin="round" dy="4.6"><textPath href="#pp11" startOffset="8" textLength="44.0" lengthAdjust="spacingAndGlyphs">Peron 11</textPath></text>
<text x="306.5" y="296.0" font-size="9" fill="#6a6a6a" text-anchor="start" font-family="DejaVu Sans, Liberation Sans, sans-serif" stroke="#ffffff" stroke-width="1.6" stroke-opacity="0.85" paint-order="stroke" stroke-linejoin="round" transform="rotate(34.5 306.5 296.0)" textLength="99.0" lengthAdjust="spacingAndGlyphs" font-style="oblique">T5-Eminönü-Alibeyköy</text>
<text x="0.5" y="258.2" font-size="10" fill="#0d6efd" text-anchor="start" font-family="DejaVu Sans, Liberation Sans, sans-serif" stroke="#ffffff" stroke-width="1.6" stroke-opacity="0.85" paint-order="stroke" stroke-linejoin="round" textLength="51.0" lengthAdjust="spacingAndGlyphs" >Pehlivanlar</text>
<text x="85.5" y="269.6" font-size="9.5" fill="#757575" text-anchor="middle" font-family="DejaVu Sans, Liberation Sans, sans-serif" stroke="#ffffff" stroke-width="1.6" stroke-opacity="0.85" paint-order="stroke" stroke-linejoin="round" >41</text>
<text x="97.0" y="314.0" font-size="10" fill="#993399" text-anchor="middle" font-family="DejaVu Sans, Liberation Sans, sans-serif" stroke="#ffffff" stroke-width="1.6" stroke-opacity="0.85" paint-order="stroke" stroke-linejoin="round" textLength="35.5" lengthAdjust="spacingAndGlyphs" >Turkcell</text>
<text x="137.3" y="332.8" font-size="10" fill="#993399" text-anchor="middle" font-family="DejaVu Sans, Liberation Sans, sans-serif" stroke="#ffffff" stroke-width="1.6" stroke-opacity="0.85" paint-order="stroke" stroke-linejoin="round" textLength="27.5" lengthAdjust="spacingAndGlyphs" >Tadım</text>
<text x="137.3" y="344.6" font-size="10" fill="#993399" text-anchor="middle" font-family="DejaVu Sans, Liberation Sans, sans-serif" stroke="#ffffff" stroke-width="1.6" stroke-opacity="0.85" paint-order="stroke" stroke-linejoin="round" textLength="20.5" lengthAdjust="spacingAndGlyphs" >büfe</text>
<text x="249.5" y="366.0" font-size="10.5" fill="#0d6efd" text-anchor="middle" font-family="DejaVu Sans, Liberation Sans, sans-serif" stroke="#ffffff" stroke-width="1.6" stroke-opacity="0.85" paint-order="stroke" stroke-linejoin="round" textLength="41.5" lengthAdjust="spacingAndGlyphs" >Eminönü</text>
<text x="249.8" y="377.6" font-size="10.5" fill="#0d6efd" text-anchor="middle" font-family="DejaVu Sans, Liberation Sans, sans-serif" stroke="#ffffff" stroke-width="1.6" stroke-opacity="0.85" paint-order="stroke" stroke-linejoin="round" textLength="50.0" lengthAdjust="spacingAndGlyphs" >Kantarcılar</text>
<text x="205.0" y="157.8" font-size="10.5" fill="#0d6efd" text-anchor="middle" font-family="DejaVu Sans, Liberation Sans, sans-serif" stroke="#ffffff" stroke-width="1.6" stroke-opacity="0.85" paint-order="stroke" stroke-linejoin="round" textLength="41.5" lengthAdjust="spacingAndGlyphs" >Eminönü</text>
<text x="205.0" y="169.6" font-size="10.5" fill="#0d6efd" text-anchor="middle" font-family="DejaVu Sans, Liberation Sans, sans-serif" stroke="#ffffff" stroke-width="1.6" stroke-opacity="0.85" paint-order="stroke" stroke-linejoin="round" textLength="35.0" lengthAdjust="spacingAndGlyphs" clip-path="url(#cmk)">(Peronu</text>
<text x="207.2" y="182.0" font-size="10.5" fill="#0d6efd" text-anchor="middle" font-family="DejaVu Sans, Liberation Sans, sans-serif" stroke="#ffffff" stroke-width="1.6" stroke-opacity="0.85" paint-order="stroke" stroke-linejoin="round" >)</text>
<text x="351.6" y="174.8" font-size="10.5" fill="#0d6efd" text-anchor="start" font-family="DejaVu Sans, Liberation Sans, sans-serif" stroke="#ffffff" stroke-width="1.6" stroke-opacity="0.85" paint-order="stroke" stroke-linejoin="round" textLength="41.5" lengthAdjust="spacingAndGlyphs" >Eminönü</text>
<text x="354.0" y="187.6" font-size="10.5" fill="#0d6efd" text-anchor="start" font-family="DejaVu Sans, Liberation Sans, sans-serif" stroke="#ffffff" stroke-width="1.6" stroke-opacity="0.85" paint-order="stroke" stroke-linejoin="round" textLength="35.0" lengthAdjust="spacingAndGlyphs" >(Peronu</text>
</svg><!--MAPEND-->
<div class="marker"><svg width="35" height="35" viewBox="0 0 24 24"><path fill="#ffcc00" d="M4 16c0 .88.39 1.670 1 2.220V20c0 .55.45 1 1 1h1c.55 0 1-.45 1-1v-1h8v1c0 .55.45 1 1 1h1c.55 0 1-.45 1-1v-1.780c.61-.55 1-1.340 1-2.220V6c0-3.500-3.580-4-8-4s-8 .5-8 4v10zm3.500 1c-.83 0-1.500-.67-1.500-1.500S6.670 14 7.500 14s1.500.67 1.500 1.500S8.330 17 7.500 17zm9 0c-.83 0-1.500-.67-1.500-1.500s.67-1.500 1.500-1.500 1.500.67 1.500 1.500-.67 1.500-1.500 1.500zm1.500-6H6V6h12v5z"/></svg></div>
<div class="mbtn" style="left:242px;top:10px;width:116px;height:29px;border:2px solid #c6c6c4;line-height:25px;letter-spacing:-0.1px;">TAM EKRAN</div>
<div class="mbtn" style="left:242px;top:49px;width:116px;height:30px;border:2px solid #4285f4;line-height:26px;padding-left:31.7px;text-align:left;letter-spacing:-0.07px;">
<svg width="9.7" height="13.2" viewBox="0 0 14 20" preserveAspectRatio="none" style="position:absolute;left:13.1px;top:6.2px"><path d="M7 0C3.1 0 0 3.1 0 7c0 5.2 7 13 7 13s7-7.8 7-13c0-3.9-3.100-7-7-7zm0 9.500A2.500 2.500 0 1 1 7 4.500a2.500 2.500 0 0 1 0 5z" fill="#4285f4"/></svg>YOL TARİFİ</div>
<div class="popup">Saat : 23:16:55<br>Tarih : 17-10-2025</div>
<div class="tipc"><div class="tip"></div></div>
<div class="pclose">×</div>
<div class="zoom"><div class="dis">+</div><div class="en">−</div></div>
</div>
</div>

<div class="card" id="c2">
<h3 style="letter-spacing:-0.08px">Aracın Görevleri</h3>
<table>
<colgroup><col style="width:66px"><col style="width:233px"><col style="width:69px"></colgroup>
<tr><th>Hat</th><th style="letter-spacing:-0.05px">Kalkış</th><th style="letter-spacing:-0.12px">Saat</th></tr>
<tr class="o"><td class="a">142F</td><td class="c">YEŞİLKENT</td><td class="t">06:55</td></tr>
<tr><td class="a">142F</td><td class="c">AVCILAR METROBÜS</td><td class="t">07:48</td></tr>
<tr class="o"><td class="a">142F</td><td class="c">YEŞİLKENT</td><td class="t">08:40</td></tr>
<tr><td class="a">142F</td><td class="c">AVCILAR METROBÜS</td><td class="t">15:56</td></tr>
<tr class="o"><td class="a">142F</td><td class="c">YEŞİLKENT</td><td class="t">16:56</td></tr>
<tr><td class="a">142F</td><td class="c">AVCILAR METROBÜS</td><td class="t">17:55</td></tr>
<tr class="o"><td class="b">97GE</td><td class="d">15 TEMMUZ MAHALLESİ</td><td class="t">21:50</td></tr>
<tr><td class="b">97GE</td><td class="c">EMİNÖNÜ</td><td class="t">23:15</td></tr>
</table>
</div>

<div class="card" id="c3">
<h3 style="letter-spacing:0.05px">Aracın Teknik Özellikleri</h3>
<div class="feat" style="left:1.6px;top:215px;"><svg width="20" height="20" viewBox="0 0 24 24" fill="#d32f2f"><circle cx="18" cy="4.540" r="2"/><path d="M15 17h-2c0 1.650-1.350 3-3 3s-3-1.350-3-3 1.350-3 3-3v-2c-2.760 0-5 2.240-5 5s2.240 5 5 5 5-2.240 5-5zm3-3.500h-1.860l1.670-3.670C18.420 8.500 17.440 7 15.960 7h-5.200c-.81 0-1.540.47-1.870 1.200L8.220 10l1.920.53L10.790 9H12.990l-1.830 4.100c-.6 1.330.39 2.900 1.850 2.900H18v5h2v-5.500c0-1.100-.9-2-2-2z"/></svg><span>Engelli Desteği</span></div>
<div class="feat" style="left:71.8px;top:215px;"><svg width="20" height="20" viewBox="0 0 24 24" fill="#d32f2f"><path d="M22 11h-4.170l3.240-3.240-1.410-1.420L15 11h-2V9l4.660-4.660-1.420-1.410L13 6.170V2h-2v4.170L7.760 2.930 6.340 4.340 11 9v2H9L4.340 6.340 2.930 7.760 6.170 11H2v2h4.170l-3.240 3.240 1.410 1.420L9 13h2v2l-4.660 4.660 1.420 1.410L11 17.830V22h2v-4.170l3.240 3.240 1.420-1.410L13 15v-2h2l4.660 4.660 1.410-1.420L17.830 13H22z"/></svg><span>Klima</span></div>
<div class="feat" style="left:143.5px;top:215px;"><svg width="20" height="20" viewBox="0 0 24 24" fill="#d32f2f"><path d="M15.500 5.500c1.100 0 2-.9 2-2s-.9-2-2-2-2 .9-2 2 .9 2 2 2zM5 12c-2.800 0-5 2.200-5 5s2.200 5 5 5 5-2.200 5-5-2.200-5-5-5zm0 8.500c-1.900 0-3.500-1.600-3.500-3.500s1.600-3.500 3.500-3.500 3.500 1.600 3.500 3.500-1.600 3.500-3.500 3.500zm5.800-10l2.400-2.400.8.800c1.300 1.300 3 2.100 5.100 2.100V9c-1.500 0-2.700-.6-3.600-1.500l-1.900-1.900c-.5-.4-1-.6-1.600-.6s-1.100.2-1.400.6L7.800 8.400c-.4.400-.6.900-.6 1.400 0 .6.200 1.100.6 1.400L11 14v5h2v-6.200l-2.200-2.300zM19 12c-2.800 0-5 2.200-5 5s2.200 5 5 5 5-2.200 5-5-2.200-5-5-5zm0 8.500c-1.900 0-3.500-1.600-3.500-3.500s1.600-3.500 3.500-3.500 3.500 1.600 3.500 3.500-1.600 3.500-3.500 3.500z"/></svg><span>Bisiklet Taşıma</span></div>
<div class="feat" style="left:223.2px;top:215px;"><svg width="20" height="20" viewBox="0 0 24 24" fill="#2e7d32"><path d="M17 5v16c0 .55-.45 1-1 1H8c-.55 0-1-.45-1-1V5c0-.55.45-1 1-1h2V2h4v2h2c.55 0 1 .45 1 1zm-2 1H9v4h6V6z"/></svg><span>USB Şarj</span></div>
<div class="feat" style="left:274.0px;top:215px;"><svg width="20" height="20" viewBox="0 0 24 24" fill="#2e7d32"><path d="M6,22h16V5.970L6,22z M20,20h-2v-7.220l2-2V20z M5.220,7.220L3.930,5.930c3.900-3.910,10.240-3.910,14.150,0l-1.290,1.290 C13.600,4.030,8.410,4.030,5.220,7.220z M12.930,11.070L11,13l-1.930-1.930C10.140,10.010,11.860,10.010,12.930,11.070z M14.220,9.790 c-1.780-1.770-4.660-1.770-6.430,0L6.500,8.500c2.480-2.480,6.520-2.480,9,0L14.220,9.790z"/></svg><span>WiFi</span></div>
</div>

<div class="card" id="c4">
<h3 style="letter-spacing:-0.73px">OPERATOR BİLGİSİ</h3>
<div style="font-weight:700;font-size:16px;line-height:24px;letter-spacing:-0.35px;">İETT</div>
</div>

<div id="bar">B4039 - 34NL5354</div>

</body>
</html>
